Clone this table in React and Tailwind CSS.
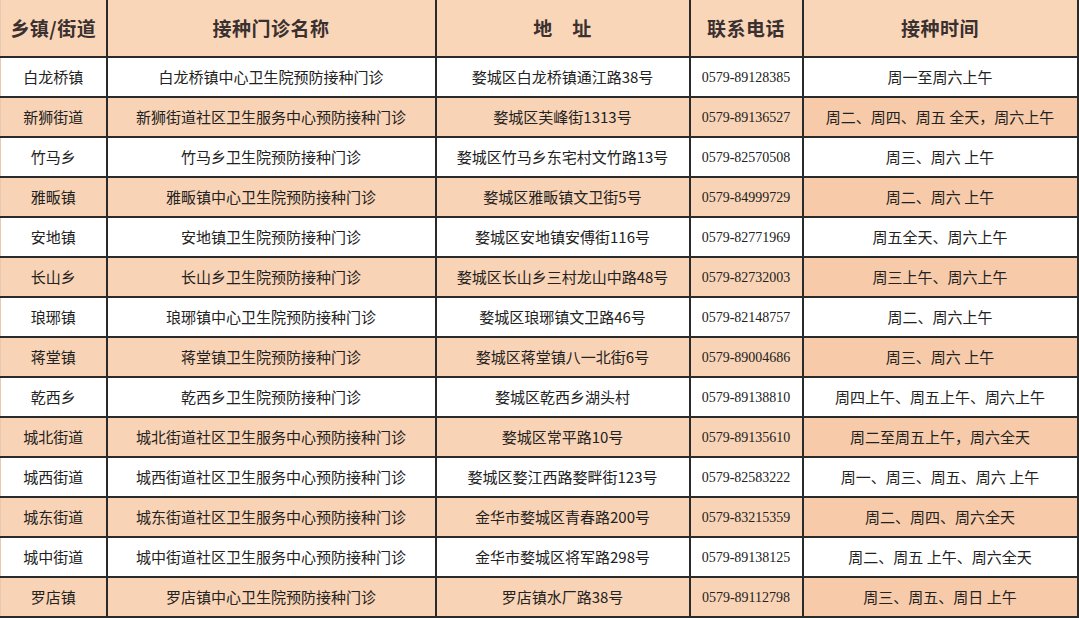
const rows = [
  ['白龙桥镇', '白龙桥镇中心卫生院预防接种门诊', '婺城区白龙桥镇通江路38号', '0579-89128385', '周一至周六上午'],
  ['新狮街道', '新狮街道社区卫生服务中心预防接种门诊', '婺城区芙峰街1313号', '0579-89136527', '周二、周四、周五 全天，周六上午'],
  ['竹马乡', '竹马乡卫生院预防接种门诊', '婺城区竹马乡东宅村文竹路13号', '0579-82570508', '周三、周六 上午'],
  ['雅畈镇', '雅畈镇中心卫生院预防接种门诊', '婺城区雅畈镇文卫街5号', '0579-84999729', '周二、周六 上午'],
  ['安地镇', '安地镇卫生院预防接种门诊', '婺城区安地镇安傅街116号', '0579-82771969', '周五全天、周六上午'],
  ['长山乡', '长山乡卫生院预防接种门诊', '婺城区长山乡三村龙山中路48号', '0579-82732003', '周三上午、周六上午'],
  ['琅琊镇', '琅琊镇中心卫生院预防接种门诊', '婺城区琅琊镇文卫路46号', '0579-82148757', '周二、周六上午'],
  ['蒋堂镇', '蒋堂镇卫生院预防接种门诊', '婺城区蒋堂镇八一北街6号', '0579-89004686', '周三、周六 上午'],
  ['乾西乡', '乾西乡卫生院预防接种门诊', '婺城区乾西乡湖头村', '0579-89138810', '周四上午、周五上午、周六上午'],
  ['城北街道', '城北街道社区卫生服务中心预防接种门诊', '婺城区常平路10号', '0579-89135610', '周二至周五上午，周六全天'],
  ['城西街道', '城西街道社区卫生服务中心预防接种门诊', '婺城区婺江西路婺畔街123号', '0579-82583222', '周一、周三、周五、周六 上午'],
  ['城东街道', '城东街道社区卫生服务中心预防接种门诊', '金华市婺城区青春路200号', '0579-83215359', '周二、周四、周六全天'],
  ['城中街道', '城中街道社区卫生服务中心预防接种门诊', '金华市婺城区将军路298号', '0579-89138125', '周二、周五 上午、周六全天'],
  ['罗店镇', '罗店镇中心卫生院预防接种门诊', '罗店镇水厂路38号', '0579-89112798', '周三、周五、周日 上午'],
];

const headers = ['乡镇/街道', '接种门诊名称', '地　址', '联系电话', '接种时间'];
const widths = ['w-[106px]', 'w-[329px]', 'w-[254px]', 'w-[113px]', 'w-[275px]'];

const sans = { fontFamily: '"Noto Sans CJK SC", "Noto Sans", sans-serif' };

export default function App() {
  return (
    <div className="w-[1079px] h-[618px] bg-white overflow-hidden" style={sans}>
      <table className="w-[1078px] table-fixed border-collapse text-[#222]">
        <colgroup>
          {widths.map((w, i) => (
            <col key={i} className={w} />
          ))}
        </colgroup>
        <thead>
          <tr className="h-[57px] bg-[#fad6b9]">
            {headers.map((h, i) => (
              <th
                key={i}
                className={`border-b-2 border-r-2 border-[#2a2a2a] text-[19px] font-bold text-[#3a3030] tracking-wide ${i === 0 ? 'border-l border-l-[#e8c8b0]' : ''}`}
              >
                {h}
              </th>
            ))}
          </tr>
        </thead>
        <tbody>
          {rows.map((r, ri) => (
            <tr key={ri} className={`h-[40px] ${ri % 2 === 1 ? 'bg-[#f9d3b5]' : 'bg-white'}`}>
              {r.map((c, ci) => (
                <td
                  key={ci}
                  className={`border-b-2 border-r-2 border-[#2a2a2a] text-center whitespace-nowrap p-0 ${
                    ci === 3 ? 'text-[14px]' : 'text-[15px]'
                  } ${ci === 0 ? 'border-l border-l-[#e8c8b0]' : ''} ${ci === 4 && ri % 2 === 1 ? 'bg-[#f7caa9]' : ''}`}
                  style={ci === 3 ? { fontFamily: '"Liberation Serif", serif' } : undefined}
                >
                  {c}
                </td>
              ))}
            </tr>
          ))}
        </tbody>
      </table>
    </div>
  );
}
